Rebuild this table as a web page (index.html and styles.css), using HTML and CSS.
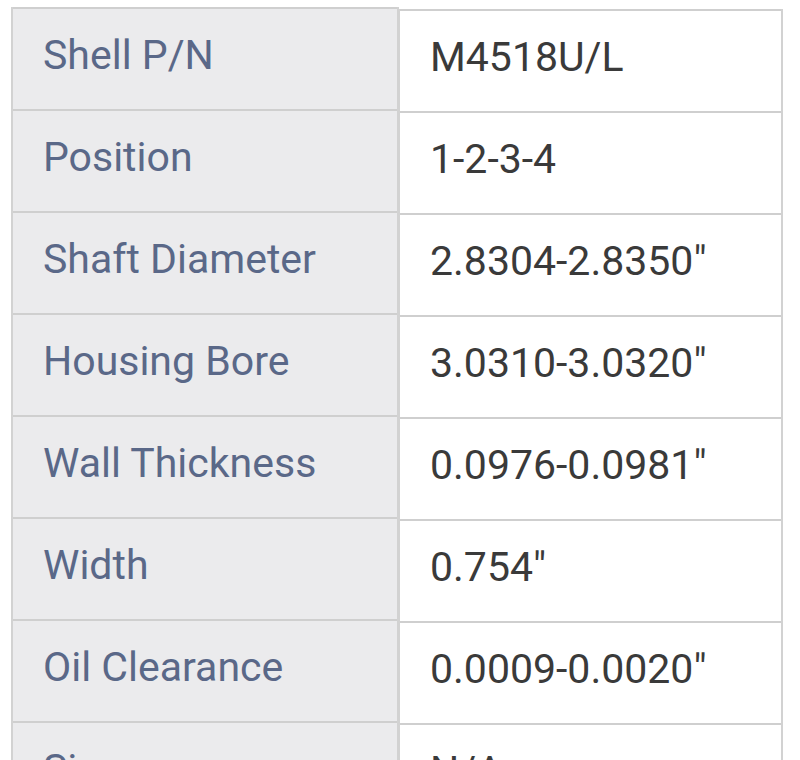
FILE: index.html
```html
<!DOCTYPE html>
<html>
<head>
<meta charset="utf-8">
<link rel="stylesheet" href="styles.css">
</head>
<body>
<div class="spec">
  <div class="col labels">
    <div class="cell">Shell P/N</div>
    <div class="cell">Position</div>
    <div class="cell">Shaft Diameter</div>
    <div class="cell">Housing Bore</div>
    <div class="cell">Wall Thickness</div>
    <div class="cell">Width</div>
    <div class="cell">Oil Clearance</div>
    <div class="cell">Size</div>
  </div>
  <div class="col values">
    <div class="cell">M4518U/L</div>
    <div class="cell">1-2-3-4</div>
    <div class="cell">2.8304-2.8350"</div>
    <div class="cell">3.0310-3.0320"</div>
    <div class="cell">0.0976-0.0981"</div>
    <div class="cell">0.754"</div>
    <div class="cell">0.0009-0.0020"</div>
    <div class="cell">N/A</div>
  </div>
</div>
</body>
</html>
```
FILE: styles.css
```css
html, body {
  margin: 0;
  padding: 0;
  background: #fff;
  overflow: hidden;
  height: 760px;
}
.spec {
  display: flex;
  align-items: flex-start;
  padding: 7px 0 0 11px;
  font-family: Roboto, "Liberation Sans", sans-serif;
  font-size: 41px;
}
.col {
  display: flex;
  flex-direction: column;
  border-left: 2px solid #d2d2d2;
  border-right: 2px solid #d2d2d2;
}
.labels {
  width: 384px;
  background: #ebebed;
  color: #5a6888;
}
.values {
  width: 381px;
  margin-top: 2px;
  margin-left: -1px;
  background: #fff;
  color: #3a3a3a;
}
.cell {
  height: 74px;
  padding-top: 26px;
  padding-left: 30px;
  border-top: 2px solid #cfcfcf;
  line-height: 1;
  white-space: nowrap;
}
```
